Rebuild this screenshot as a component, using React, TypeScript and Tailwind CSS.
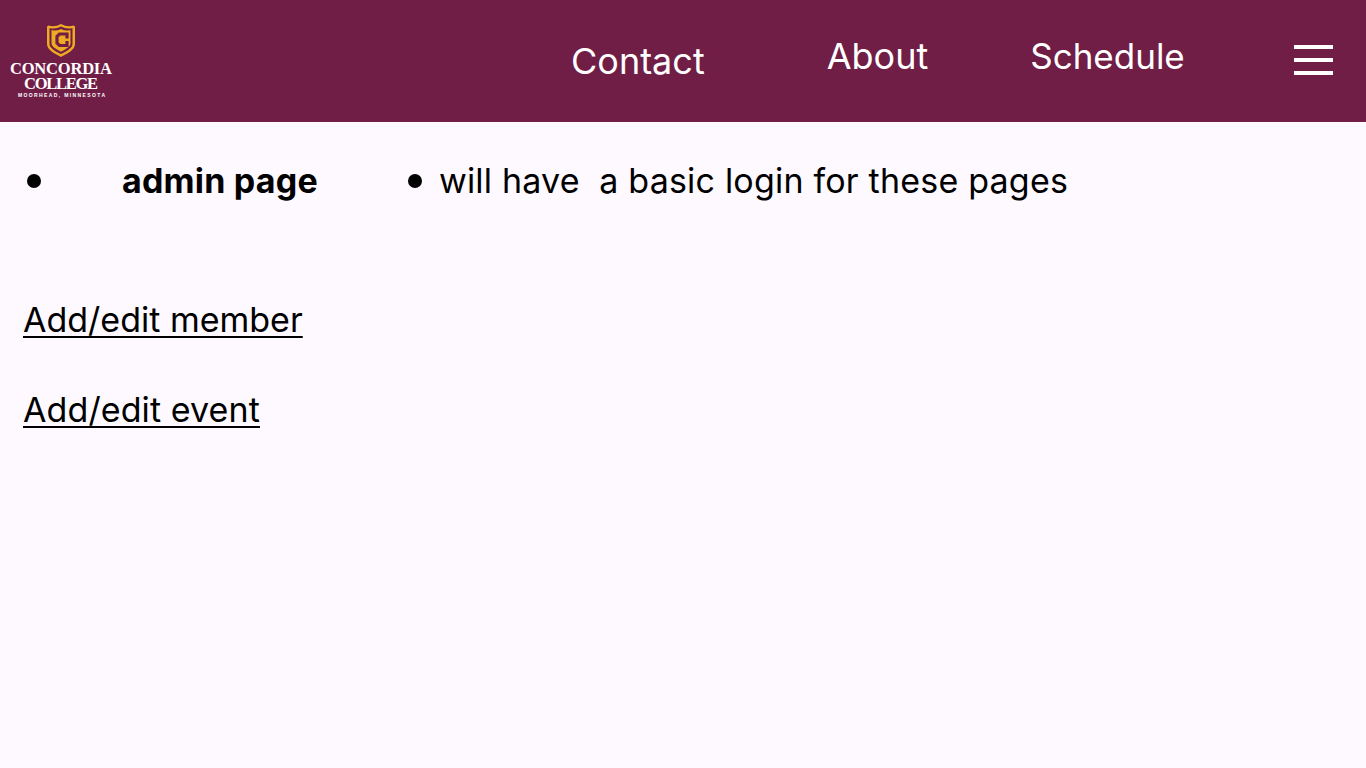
export default function App() {
  return (
    <div className="min-h-[768px] bg-[#fdf9fe] text-black" style={{ fontFamily: 'Inter, "Noto Sans", sans-serif' }}>
      <header className="h-[122px] bg-[#701e46] flex items-start text-white">
        <svg className="ml-[9px] mt-[23px] shrink-0 overflow-visible" width="104" height="76" viewBox="0 0 104 76">
          <g transform="translate(37.5 0)">
            <path d="M2 2.5 Q8 4.5 14.5 1 Q21 4.5 27 2.5 L28.5 3.5 V21 C28.5 27 20 31 14.5 34 C9 31 0.5 27 0.5 21 V3.5 Z" fill="#eeaa22" />
            <path d="M3 5 Q9 6.5 14.5 3.5 Q20 6.5 26 5 V21 C26 25.5 18.5 29 14.5 31 C10.5 29 3 25.5 3 21 Z" fill="#701e46" />
            <path d="M5 7 Q10 8.5 14.5 6 Q19 8.5 24 7 V20.5 C24 24 17.5 27 14.5 28.7 C11.5 27 5 24 5 20.5 Z" fill="#eeaa22" />
            <path d="M20.5 15.5 V11 H13 L10.5 13.5 V20 L13 22.5 H20.5 V18" fill="none" stroke="#701e46" strokeWidth="3.2" />
          </g>
          <g fill="#ffffff" fontFamily='"Liberation Serif", serif' fontWeight="700">
            <text x="1" y="51" fontSize="16.5" textLength="102">CONCORDIA</text>
            <text x="15" y="66" fontSize="16.5" textLength="74">COLLEGE</text>
            <text x="9" y="74" fontSize="5" textLength="87" fontFamily='"Liberation Sans", sans-serif'>MOORHEAD, MINNESOTA</text>
          </g>
        </svg>
        <nav className="flex items-start text-[36px] leading-[46px] ml-[458px] whitespace-nowrap">
          <a className="mt-[38px]">Contact</a>
          <a className="mt-[33px] ml-[122px]">About</a>
          <a className="mt-[33px] ml-[102px] text-[35px]">Schedule</a>
        </nav>
        <div className="ml-auto mr-[33px] mt-[45px] w-[39px] flex flex-col gap-[9px]">
          <div className="h-[4px] bg-white" />
          <div className="h-[4px] bg-white" />
          <div className="h-[4px] bg-white" />
        </div>
      </header>
      <main className="text-[34px] leading-[46px]">
        <div className="flex items-center pt-[36px]">
          <span className="ml-[27px] w-[14px] h-[14px] rounded-full bg-black" />
          <b className="ml-[81px] font-bold tracking-[0.2px]">admin page</b>
          <span className="ml-[90px] w-[14px] h-[14px] rounded-full bg-black" />
          <span className="ml-[17px] whitespace-pre tracking-[0.2px]">will have  a basic login for these pages</span>
        </div>
        <div className="mt-[93px] ml-[23px] underline decoration-2 underline-offset-[4px]">Add/edit member</div>
        <div className="mt-[44px] ml-[23px] tracking-[0.1px] underline decoration-2 underline-offset-[4px]">Add/edit event</div>
      </main>
    </div>
  );
}
